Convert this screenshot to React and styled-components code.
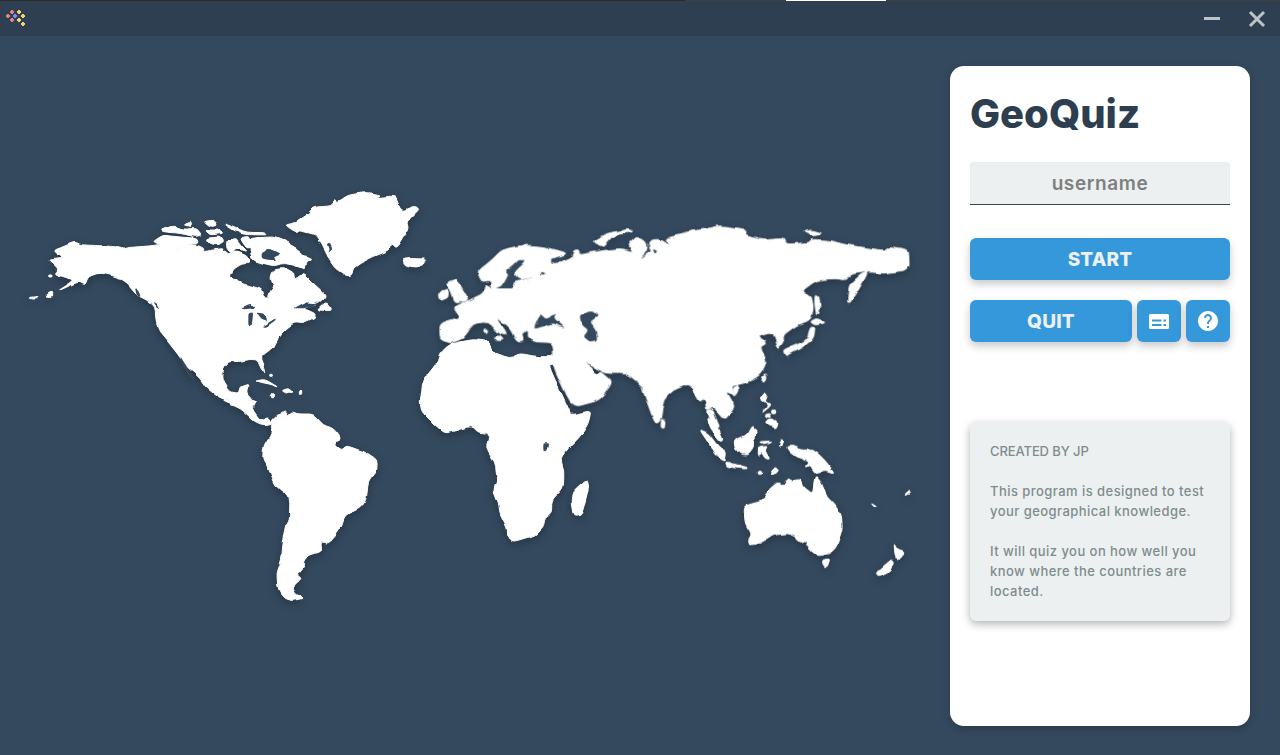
import React from "react";
import styled, { createGlobalStyle } from "styled-components";

const Global = createGlobalStyle`
  html, body { margin: 0; padding: 0; height: 100%; background: #34495e; overflow: hidden; }
  #root { height: 100%; }
  * { box-sizing: border-box; }
`;

const sans = `Inter, "Noto Sans", sans-serif`;

const Window = styled.div`
  height: 755px;
  display: flex;
  flex-direction: column;
  background: #34495e;
  font-family: ${sans};
`;

const ChromeStrip = styled.div`
  height: 1px;
  flex: none;
  display: flex;
  background: #3d4146;
`;
const StripGap = styled.div`
  width: ${(p) => p.$w}px;
  background: ${(p) => p.$c};
`;

const TitleBar = styled.header`
  flex: none;
  height: 35px;
  background: #2f3f52;
  display: flex;
  align-items: center;
  justify-content: space-between;
  padding: 0 14px 0 6px;
`;
const WindowButtons = styled.div`
  display: flex;
  align-items: center;
  gap: 28px;
`;
const Main = styled.main`
  flex: 1;
  display: flex;
  min-height: 0;
`;
const MapPane = styled.div`
  flex: none;
  width: 950px;
`;
const MapSvg = styled.svg`
  display: block;
  filter: drop-shadow(0 3px 4px rgba(0, 0, 0, 0.28));
`;
const Card = styled.section`
  width: 300px;
  height: 660px;
  margin-top: 30px;
  background: #fff;
  border-radius: 14px;
  padding: 20px;
  box-shadow: 0 3px 8px rgba(0, 0, 0, 0.2);
  display: flex;
  flex-direction: column;
`;
const Title = styled.h1`
  margin: 0;
  height: 56px;
  font-size: 40px;
  line-height: 56px;
  font-weight: 800;
  letter-spacing: 0;
  color: #2c3e50;
`;
const UserField = styled.div`
  margin-top: 20px;
  height: 43px;
  background: #ecf0f1;
  border-radius: 3px 3px 0 0;
  border-bottom: 1px solid #3d4650;
  display: flex;
  align-items: center;
  justify-content: center;
  font-size: 19px;
  font-weight: 600;
  letter-spacing: 0.6px;
  color: #7f7f7f;
`;
const Action = styled.button`
  flex: ${(p) => (p.$icon ? "none" : "1")};
  width: ${(p) => (p.$icon ? "44px" : "auto")};
  height: 42px;
  padding: 0;
  border: 0;
  border-radius: 6px;
  background: #3498db;
  color: #ecf0f1;
  font-family: ${sans};
  font-size: 19px;
  font-weight: 800;
  letter-spacing: 0.2px;
  display: flex;
  align-items: center;
  justify-content: center;
  box-shadow: 0 4px 8px rgba(0, 0, 0, 0.22);
`;
const StartRow = styled.div`
  margin-top: 33px;
  display: flex;
`;
const ButtonRow = styled.div`
  margin-top: 20px;
  display: flex;
  gap: 5px;
`;
const InfoBox = styled.div`
  margin-top: 80px;
  height: 199px;
  padding: 19px 20px;
  background: #ecf0f1;
  border-radius: 6px;
  box-shadow: 0 3px 8px rgba(0, 0, 0, 0.3);
  font-size: 13px;
  line-height: 20px;
  font-weight: 500;
  letter-spacing: 0.45px;
  color: #7f8c8d;
`;
const InfoPara = styled.p`
  margin: 0 0 20px;
  letter-spacing: ${(p) => (p.$caps ? "-0.1px" : "inherit")};
`;

const LogoDot = ({ x, y, c }) => (
  <path d={`M${x - 1} ${y - 2}h2v1h1v2h-1v1h-2v-1h-1v-2h1z`} fill={c} />
);

const dots = [
  [12, 12, "#e8808a"], [8, 16, "#e8808a"], [12, 20, "#e8808a"], [15, 16, "#6f8fe8"],
  [19, 12, "#f5cf7a"], [23, 16, "#f5cf7a"], [19, 20, "#f5cf7a"], [23, 24, "#f5cf7a"],
];

const northAmerica = [
  "M100,212 L130,200 L163,186 L190,195 L240,197 L285,200 L312,208 L330,202 L388,198 L430,192 L467,210 L500,195 L530,195 L552,205 L550,218 L590,222 L615,212 L625,222 L650,215 L675,225 L690,238 L690,250 L665,252 L640,268 L630,290 L650,305 L700,320 L725,328 L733,352 L745,355 L750,335 L762,320 L752,295 L760,270 L790,265 L820,280 L825,298 L850,280 L880,310 L918,345 L905,362 L880,375 L850,385 L885,400 L885,412 L850,428 L825,425 L800,445 L780,465 L770,490 L740,515 L720,530 L730,560 L735,580 L725,570 L712,540 L690,538 L650,545 L625,545 L610,565 L608,600 L630,635 L655,640 L660,620 L688,612 L682,640 L700,660 L610,660 L560,625 L540,595 L500,560 L475,525 L440,480 L415,450 L408,420 L405,380 L380,360 L350,345 L320,310 L290,290 L240,278 L205,290 L195,315 L175,305 L110,335 L165,300 L130,290 L105,285 L115,265 L85,240 L130,235 Z",
  "M690,175 L760,170 L800,185 L835,205 L840,222 L878,235 L860,245 L855,268 L820,255 L790,250 L760,258 L700,242 L690,215 Z",
  "M610,130 L650,145 L680,157 L735,158 L735,165 L670,163 L640,150 Z",
  "M423,150 L460,137 L490,148 L530,145 L545,165 L525,170 L480,160 L430,155 Z",
  "M490,135 L515,125 L518,140 Z",
  "M550,125 L580,120 L595,135 L570,140 Z",
  "M398,185 L430,165 L470,170 L530,175 L535,190 L500,195 L465,210 L425,195 Z",
  "M555,150 L600,150 L610,160 L570,165 Z",
  "M560,175 L605,170 L612,185 L590,195 L570,190 Z",
  "M550,215 L580,210 L610,205 L605,218 L560,222 Z",
  "M620,180 L650,175 L660,195 L680,215 L650,205 L635,222 L620,205 Z",
  "M660,175 L690,168 L695,200 L680,205 Z",
  "M30,352 L55,350 L50,357 L35,357 Z",
  "M75,348 L95,335 L95,350 Z",
  "M89,285 L99,285 L99,291 L89,291 Z",
  "M795,135 L820,130 L865,100 L880,82 L930,78 L945,58 L955,65 L985,45 L1040,37 L1085,45 L1060,55 L1125,47 L1140,85 L1150,92 L1185,78 L1198,88 L1160,125 L1165,145 L1150,175 L1130,205 L1115,190 L1110,210 L1060,230 L1020,250 L1000,265 L995,285 L980,288 L945,265 L925,235 L918,215 L905,190 L890,165 L840,152 L825,155 Z",
  "M1148,238 L1175,235 L1215,238 L1215,252 L1185,262 L1155,255 Z",
  "M890,390 L915,365 L938,392 Z",
  "M705,603 L735,598 L775,622 L755,615 L725,607 Z",
  "M785,632 L805,625 L822,640 L800,640 Z",
  "M835,633 L845,633 L845,643 L835,643 Z",
  "M751,644 L761,644 L761,653 L751,653 Z",
  "M749,583 L757,583 L757,589 L749,589 Z",
];
const northAmericaHoles = [
  "M480,527 L500,560 L522,597 L515,600 L490,565 Z",
  "M345,325 L355,328 L362,352 L350,345 Z",
  "M400,365 L412,372 L422,390 L408,378 Z",
  "M660,383 L690,370 L705,385 L670,388 Z",
  "M685,400 L700,397 L695,438 L685,438 Z",
  "M710,400 L735,405 L742,425 L725,420 Z",
  "M728,440 L765,415 L768,420 L740,440 Z",
  "M820,385 L855,367 L885,370 L900,360 L880,378 L850,385 Z",
  "M916,192 L930,188 L938,205 L925,215 L930,202 Z",
  "M725,215 L750,205 L785,222 L760,232 L770,240 L745,240 L725,235 Z",
  "M705,245 L722,250 L718,258 Z",
];

const eurasia = [
  "M60,340 L120,322 L100,292 L150,270 L190,250 L195,225 L215,235 L210,210 L185,215 L172,185 L215,150 L245,120 L310,105 L370,110 L445,130 L395,145 L395,158 L430,155 L455,145 L460,125 L475,122 L480,135 L530,125 L600,115 L640,125 L625,105 L650,80 L675,95 L680,115 L690,90 L720,88 L755,110 L735,85 L790,68 L870,55 L900,47 L975,58 L980,75 L1030,88 L1090,82 L1100,103 L1165,98 L1175,88 L1230,92 L1280,105 L1395,122 L1405,112 L1465,122 L1468,165 L1460,180 L1390,190 L1345,185 L1320,195 L1290,225 L1285,285 L1315,240 L1345,185 L1300,190 L1270,210 L1245,205 L1190,210 L1145,243 L1175,260 L1180,300 L1170,330 L1130,345 L1090,375 L1090,395 L1075,415 L1068,395 L1060,370 L1045,370 L1010,380 L1040,400 L1020,410 L1040,455 L1020,495 L985,515 L945,525 L935,530 L945,560 L935,550 L920,545 L945,590 L915,630 L880,590 L860,600 L855,565 L835,575 L810,520 L760,540 L730,570 L720,635 L705,640 L670,545 L665,525 L620,490 L560,490 L520,470 L495,450 L515,475 L525,495 L545,485 L578,515 L540,570 L458,592 L398,465 L397,398 L345,395 L325,385 L325,360 L305,370 L310,395 L290,395 L270,355 L225,320 L262,375 L240,372 L205,335 L160,340 L130,385 L90,400 L60,385 Z",
  "M860,600 L880,600 L900,660 L885,660 Z",
  "M80,220 L105,208 L120,225 L147,270 L105,280 L95,245 Z",
  "M58,250 L85,235 L85,262 L60,272 Z",
  "M515,95 L560,70 L630,58 L640,65 L580,75 L550,110 Z",
  "M1148,65 L1175,60 L1208,70 L1180,78 Z",
  "M1185,255 L1197,260 L1200,290 L1190,318 L1185,290 Z",
  "M1170,335 L1190,325 L1218,338 L1185,345 Z",
  "M1092,420 L1130,405 L1160,390 L1172,350 L1185,355 L1180,385 L1150,410 L1110,430 L1100,438 Z",
  "M725,625 L735,635 L733,652 L723,650 Z",
  "M1025,505 L1035,493 L1038,505 L1030,515 Z",
  "M0,145 L16,150 L16,158 L0,162 Z",
  "M940,535 L950,525 L955,540 L945,558 Z",
  "M192,360 L202,360 L202,370 L192,370 Z",
  "M225,380 L240,378 L250,390 L235,392 Z",
];
const eurasiaHoles = [
  "M340,355 L360,310 L378,328 L410,310 L405,325 L440,355 L400,340 L375,345 Z",
  "M478,315 L515,302 L535,318 L510,335 L530,360 L535,390 L510,395 L490,380 L505,360 L485,345 Z",
  "M320,150 L295,150 L260,180 L265,192 L245,228 L225,235 L280,235 L285,215 L345,200 L300,210 L280,190 Z",
  "M395,150 L445,135 L430,155 L400,160 Z",
  "M362,185 L378,190 L365,195 Z",
  "M658,148 L680,125 L685,95 L690,125 Z",
  "M698,118 L712,122 L705,132 Z",
];

const africaSouth = [
  "M995,45 L1053,32 L1045,70 L1020,110 L980,150 L962,175 L972,215 L970,265 L935,300 L935,340 L915,355 L910,380 L880,410 L820,428 L805,415 L800,380 L780,340 L775,310 L760,270 L772,235 L765,190 L738,145 L748,100 L715,97 L695,78 L650,92 L615,100 L585,75 L545,35 L540,5 L550,-60 L590,-110 L600,-140 L630,-168 L700,-182 L748,-175 L755,-145 L810,-125 L840,-140 L890,-130 L925,-130 L945,-130 L945,-108 L925,-105 L985,25 Z",
  "M997,275 L1040,237 L1047,260 L1025,345 L1000,350 L993,310 Z",
  "M95,60 L135,30 L145,45 L155,35 L175,42 L220,42 L250,75 L280,85 L303,115 L285,135 L305,150 L320,137 L370,155 L412,182 L410,215 L385,245 L378,300 L360,325 L315,345 L305,380 L285,410 L265,430 L243,425 L245,455 L205,465 L190,485 L195,495 L170,525 L185,535 L158,560 L165,580 L190,595 L155,602 L135,595 L115,570 L110,520 L125,480 L128,435 L140,375 L148,360 L150,290 L110,262 L85,205 L67,175 L72,135 L95,100 Z",
  "M-60,0 L50,0 L35,25 L62,62 L85,52 L97,70 L70,75 L45,65 L20,42 L0,25 Z",
];
const africaHoles = ["M910,130 L925,130 L920,152 L910,154 Z"];

const oceania = [
  "M52,112 L75,125 L100,180 L90,185 L60,145 Z",
  "M28,148 L55,160 L85,200 L110,215 L105,245 L75,225 L60,195 Z",
  "M107,245 L130,252 L172,262 L170,267 L125,262 L110,258 Z",
  "M132,182 L170,165 L185,137 L195,150 L203,155 L190,185 L190,205 L175,225 L150,222 L135,205 Z",
  "M212,185 L250,183 L215,193 Z",
  "M205,205 L232,198 L225,212 L240,238 L225,235 L215,218 L205,228 Z",
  "M268,200 L275,177 L282,180 L275,200 Z",
  "M292,200 L310,198 L335,210 L370,210 L400,235 L435,280 L405,270 L385,275 L375,278 L360,255 L345,262 L355,245 L320,230 L300,215 Z",
  "M225,38 L233,45 L225,65 L245,75 L215,100 L235,75 L210,60 Z",
  "M225,125 L245,115 L262,125 L255,145 L235,135 Z",
  "M245,90 L257,90 L257,101 L245,101 Z",
  "M228,105 L240,100 L245,112 L232,110 Z",
  "M205,271 L215,271 L215,280 L205,280 Z",
  "M240,280 L255,262 L263,268 L250,282 Z",
  "M162,378 L220,362 L228,340 L262,310 L280,318 L295,295 L303,302 L335,298 L340,320 L368,342 L375,285 L395,310 L410,350 L435,375 L455,410 L457,450 L440,500 L420,520 L385,528 L360,510 L345,480 L330,487 L315,470 L295,460 L250,465 L210,490 L180,495 L175,480 L185,462 L165,430 Z",
  "M395,545 L423,538 L415,563 L405,562 Z",
  "M612,490 L622,510 L645,518 L625,542 L615,525 Z",
  "M558,578 L605,538 L615,550 L595,575 L565,588 Z",
  "M543,370 L560,380 L555,383 Z",
  "M643,345 L658,330 L660,335 L650,345 Z",
];

// Rounds each polygon corner so that the coastlines do not look faceted.
const rounded = (d, t = 0.28) => {
  const pts = d.match(/-?\d+,-?\d+/g).map((s) => s.split(",").map(Number));
  const mix = (a, b, k) => [a[0] + (b[0] - a[0]) * k, a[1] + (b[1] - a[1]) * k];
  const n = pts.length;
  let out = "";
  pts.forEach((p, i) => {
    const a = mix(p, pts[(i + n - 1) % n], t);
    const b = mix(p, pts[(i + 1) % n], t);
    out += `${i ? "L" : "M"}${a[0].toFixed(1)},${a[1].toFixed(1)} Q${p[0]},${p[1]} ${b[0].toFixed(1)},${b[1].toFixed(1)} `;
  });
  return out + "Z";
};

const Land = ({ at, land, holes = [] }) => (
  <g transform={`translate(${at[0]} ${at[1]}) scale(0.33333)`}>
    {land.map((d, i) => (
      <path key={i} d={rounded(d)} fill="#fff" stroke="#fff" strokeWidth="3" strokeLinejoin="round" />
    ))}
    {holes.map((d, i) => (
      <path key={i} d={rounded(d)} fill="#34495e" />
    ))}
  </g>
);

export default function App() {
  return (
    <Window>
      <Global />
      <ChromeStrip>
        <StripGap $w={685} $c="#2b2b2b" />
        <StripGap $w={101} $c="#3d4146" />
        <StripGap $w={100} $c="#ffffff" />
      </ChromeStrip>
      <TitleBar>
        <svg width="24" height="29" viewBox="0 0 24 29" aria-hidden="true">
          <g transform="translate(-6 -4)">
            {dots.map(([x, y, c], i) => (
              <LogoDot key={i} x={x} y={y} c={c} />
            ))}
          </g>
        </svg>
        <WindowButtons>
          <svg width="16" height="16" viewBox="0 0 16 16" aria-hidden="true">
            <rect x="0" y="6" width="16" height="3" fill="#bdc3c7" />
          </svg>
          <svg width="18" height="18" viewBox="0 0 18 18" aria-hidden="true">
            <path d="M2 2 L16 16 M16 2 L2 16" stroke="#bdc3c7" strokeWidth="3" />
          </svg>
        </WindowButtons>
      </TitleBar>
      <Main>
        <MapPane>
          <MapSvg width="950" height="719" viewBox="0 36 950 719" role="img" aria-label="World map">
            <defs>
              <filter id="coast" x="-2%" y="-2%" width="104%" height="104%" colorInterpolationFilters="sRGB">
                <feTurbulence type="fractalNoise" baseFrequency="0.09" numOctaves="2" seed="4" result="n" />
                <feDisplacementMap in="SourceGraphic" in2="n" scale="4" xChannelSelector="R" yChannelSelector="G" />
                <feGaussianBlur stdDeviation="0.35" />
              </filter>
            </defs>
            <g filter="url(#coast)">
              <Land at={[20, 180]} land={northAmerica} holes={northAmericaHoles} />
              <Land at={[420, 210]} land={eurasia} holes={eurasiaHoles} />
              <Land at={[240, 400]} land={africaSouth} holes={africaHoles} />
              <Land at={[690, 380]} land={oceania} />
            </g>
          </MapSvg>
        </MapPane>
        <Card>
          <Title>GeoQuiz</Title>
          <UserField>username</UserField>
          <StartRow>
            <Action>START</Action>
          </StartRow>
          <ButtonRow>
            <Action>QUIT</Action>
            <Action $icon aria-label="Scores">
              <svg width="20" height="15" viewBox="0 0 20 15" aria-hidden="true">
                <path
                  fillRule="evenodd"
                  fill="#ffffff"
                  d="M1.5 0h17A1.5 1.5 0 0 1 20 1.500v12a1.500 1.500 0 0 1-1.500 1.500h-17A1.500 1.500 0 0 1 0 13.500v-12A1.500 1.500 0 0 1 1.500 0zM3 5.500v2h9.500v-2zm11.500 0v2H17v-2zM3 10v2h9.500v-2zm11.500 0v2H17v-2z"
                />
              </svg>
            </Action>
            <Action $icon aria-label="Help">
              <svg width="24" height="24" viewBox="0 0 24 24" aria-hidden="true">
                <path
                  fill="#fff"
                  d="M12 2C6.48 2 2 6.48 2 12s4.48 10 10 10 10-4.48 10-10S17.52 2 12 2zm1 17h-2v-2h2v2zm2.07-7.750l-.9.920C13.450 12.900 13 13.500 13 15h-2v-.5c0-1.100.45-2.100 1.170-2.830l1.240-1.260c.37-.36.59-.86.59-1.410 0-1.100-.9-2-2-2s-2 .9-2 2H8c0-2.210 1.790-4 4-4s4 1.790 4 4c0 .88-.36 1.680-.93 2.250z"
                />
              </svg>
            </Action>
          </ButtonRow>
          <InfoBox>
            <InfoPara $caps>CREATED BY JP</InfoPara>
            <InfoPara>
              This program is designed to test
              <br />
              your geographical knowledge.
            </InfoPara>
            <InfoPara>
              It will quiz you on how well you
              <br />
              know where the countries are
              <br />
              located.
            </InfoPara>
          </InfoBox>
        </Card>
      </Main>
    </Window>
  );
}
